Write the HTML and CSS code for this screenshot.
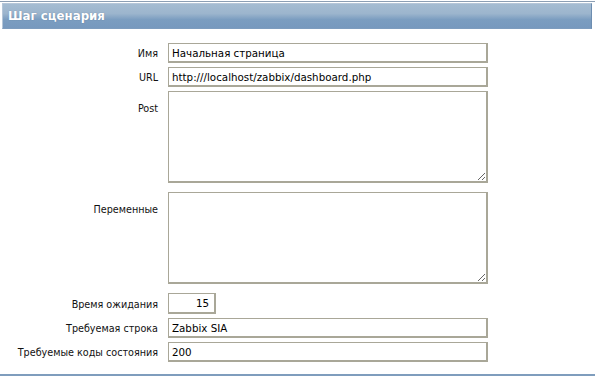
FILE: index.html
```html
<!DOCTYPE html>
<html lang="ru">
<head>
    <meta charset="UTF-8">
    <title>Шаг сценария</title>
    <link rel="stylesheet" href="styles.css">
</head>
<body>

    <div class="top-line"></div>

    <div class="header">
        <span class="header-title">Шаг сценария</span>
    </div>

    <form class="step-form">
        <div class="form-row">
            <label for="name">Имя</label>
            <input type="text" id="name" class="field" value="Начальная страница">
        </div>
        <div class="form-row">
            <label for="url">URL</label>
            <input type="text" id="url" class="field" value="http:///localhost/zabbix/dashboard.php">
        </div>
        <div class="form-row form-row-area">
            <label for="post">Post</label>
            <textarea id="post" class="field area"></textarea>
        </div>
        <div class="form-row form-row-area">
            <label for="variables">Переменные</label>
            <textarea id="variables" class="field area"></textarea>
        </div>
        <div class="form-row">
            <label for="timeout">Время ожидания</label>
            <input type="text" id="timeout" class="field field-short" value="15">
        </div>
        <div class="form-row">
            <label for="required">Требуемая строка</label>
            <input type="text" id="required" class="field" value="Zabbix SIA">
        </div>
        <div class="form-row">
            <label for="codes">Требуемые коды состояния</label>
            <input type="text" id="codes" class="field" value="200">
        </div>
    </form>

    <div class="bottom-line"></div>

</body>
</html>
```

FILE: styles.css
```css
body {
    font-family: 'DejaVu Sans', Verdana, sans-serif;
    font-size: 11px;
    margin: 0;
    padding: 0;
    background: #fff;
    color: #000;
    width: 595px;
    height: 376px;
    overflow: hidden;
}

.top-line {
    height: 1px;
    margin-top: 1px;
    background: #8d9fb4;
}

.header {
    margin: 1px 3px 0 2px;
    height: 24px;
    border: 1px solid #b5c6d8;
    border-right-color: #6d8db0;
    border-bottom-color: #7d9cbe;
    background: linear-gradient(to bottom, #a5bcd2 0%, #9cb5cd 40%, #7b9dc0 65%, #7799be 100%);
    display: flex;
    align-items: center;
    padding-left: 5px;
}

.header-title {
    color: #fff;
    font-weight: bold;
    font-size: 11.8px;
    text-shadow: 0 0 1px rgba(60, 80, 110, 0.5);
}

.step-form {
    margin-top: 14px;
}

.form-row {
    display: grid;
    grid-template-columns: 158px 1fr;
    column-gap: 10px;
    align-items: center;
    margin-bottom: 4px;
}

.form-row-area {
    align-items: start;
    margin-bottom: 9px;
}

.form-row label {
    text-align: right;
    font-family: 'DejaVu Sans Condensed', 'DejaVu Sans', sans-serif;
    font-size: 10.7px;
    color: #111;
    padding-top: 1px;
}

.form-row-area label {
    padding-top: 11px;
}

.field {
    box-sizing: border-box;
    width: 320px;
    height: 20px;
    border: 1px solid #a9a798;
    border-width: 1px 2px 2px 1px;
    padding: 0 3px;
    font-family: 'DejaVu Sans', Verdana, sans-serif;
    font-size: 10.3px;
    color: #000;
    background: #fff;
    outline: none;
}

.area {
    height: 92px;
    resize: both;
}

.field-short {
    width: 48px;
    height: 21px;
    text-align: right;
    padding-right: 5px;
}

.bottom-line {
    position: absolute;
    left: 0;
    right: 0;
    top: 374px;
    height: 2px;
    background: #7f9dbd;
}
```
